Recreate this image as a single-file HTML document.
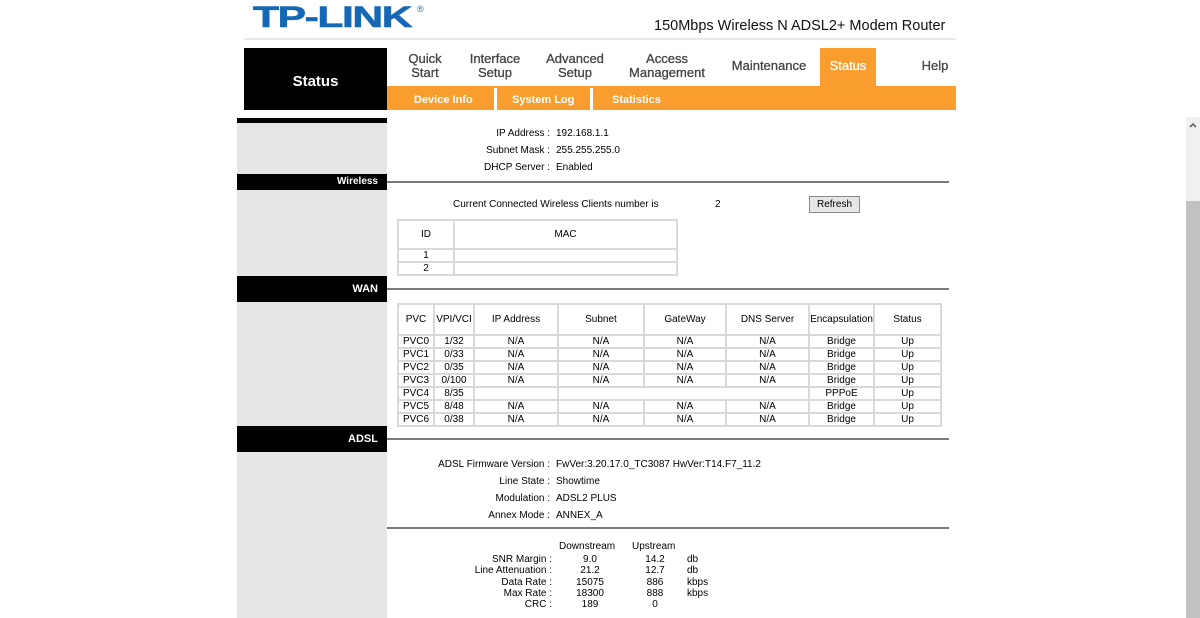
<!DOCTYPE html>
<html><head><meta charset="utf-8"><style>
*{margin:0;padding:0;box-sizing:border-box}
body{width:1200px;height:618px;overflow:hidden;background:#fff;font-family:"Liberation Sans",Arial,sans-serif;font-size:10px;color:#000;position:relative}
.a{position:absolute}
.gray{background:#e6e6e6}
.blk{background:#000;color:#fff;font-weight:bold;text-align:right;padding-right:9px;font-size:11px}
.hl{height:2px;background:#7a7a7a}
.nav{color:#444;font-size:13px;text-align:center;line-height:14px;-webkit-text-stroke:0.3px #444}
.sub{color:#fff;font-size:11px;font-weight:bold}
.r{text-align:right}
table{border-collapse:collapse;position:absolute}
td{border:2px solid #d9d9d9;text-align:center;font-size:10px;padding:0;line-height:10px}
</style></head><body>
<div class="a" style="left:253px;top:1px;color:#1568b5;font-size:30px;font-weight:bold;transform:scaleX(1.42);transform-origin:left top;letter-spacing:-1px;-webkit-text-stroke:0.6px #1568b5">TP-LINK</div>
<div class="a" style="left:417px;top:4px;color:#1568b5;font-size:9px">®</div>
<div class="a" style="left:654px;top:18px;font-size:14.5px;color:#111">150Mbps Wireless N ADSL2+ Modem Router</div>
<div class="a" style="left:244px;top:38px;width:712px;height:2px;background:#e8e8e8"></div>

<div class="a gray" style="left:237px;top:118px;width:150px;height:500px"></div>
<div class="a" style="left:244px;top:48px;width:143px;height:62px;background:#000;color:#fff;font-size:15px;font-weight:bold;text-align:center;line-height:62px;padding-top:3px">Status</div>
<div class="a" style="left:387px;top:86px;width:569px;height:24px;background:#f99d2e"></div>
<div class="a" style="left:820px;top:48px;width:56px;height:38px;background:#f99d2e"></div>
<div class="a" style="left:494px;top:88px;width:3px;height:22px;background:#fff"></div>
<div class="a" style="left:590px;top:88px;width:3px;height:22px;background:#fff"></div>
<div class="a nav" style="left:400px;top:52px;width:50px">Quick<br>Start</div>
<div class="a nav" style="left:462px;top:52px;width:66px">Interface<br>Setup</div>
<div class="a nav" style="left:540px;top:52px;width:70px">Advanced<br>Setup</div>
<div class="a nav" style="left:622px;top:52px;width:90px">Access<br>Management</div>
<div class="a nav" style="left:726px;top:59px;width:86px">Maintenance</div>
<div class="a nav" style="left:820px;top:59px;width:56px;color:#fff;-webkit-text-stroke:0.3px #fff">Status</div>
<div class="a nav" style="left:910px;top:59px;width:50px">Help</div>
<div class="a sub" style="left:414px;top:94px">Device Info</div>
<div class="a sub" style="left:512px;top:94px">System Log</div>
<div class="a sub" style="left:612px;top:94px">Statistics</div>

<div class="a" style="left:237px;top:118px;width:150px;height:5px;background:#000"></div>
<div class="a r" style="left:400px;top:125px;width:150px;line-height:17px">IP Address :<br>Subnet Mask :<br>DHCP Server :</div>
<div class="a" style="left:556px;top:125px;line-height:17px">192.168.1.1<br>255.255.255.0<br>Enabled</div>

<div class="a blk" style="left:237px;top:174px;width:150px;height:16px;line-height:16px;font-size:10px">Wireless</div>
<div class="a hl" style="left:387px;top:181px;width:562px"></div>
<div class="a" style="left:453px;top:199px">Current Connected Wireless Clients number is</div>
<div class="a" style="left:715px;top:199px">2</div>
<div class="a" style="left:809px;top:196px;width:51px;height:17px;background:#e6e6e6;border:1px solid #888;text-align:center;line-height:15px">Refresh</div>
<table style="left:397px;top:219px;width:281px">
<tr style="height:29px"><td style="width:56px">ID</td><td>MAC</td></tr>
<tr style="height:13px"><td>1</td><td></td></tr>
<tr style="height:13px"><td>2</td><td></td></tr>
</table>

<div class="a blk" style="left:237px;top:276px;width:150px;height:26px;line-height:26px">WAN</div>
<div class="a hl" style="left:387px;top:288px;width:562px"></div>
<table style="left:397px;top:303px;width:545px">
<tr style="height:31px"><td style="width:36px">PVC</td><td style="width:40px">VPI/VCI</td><td style="width:84px">IP Address</td><td style="width:86px">Subnet</td><td style="width:82px">GateWay</td><td style="width:83px">DNS Server</td><td style="width:65px">Encapsulation</td><td>Status</td></tr>
<tr style="height:13px"><td>PVC0</td><td>1/32</td><td>N/A</td><td>N/A</td><td>N/A</td><td>N/A</td><td>Bridge</td><td>Up</td></tr>
<tr style="height:13px"><td>PVC1</td><td>0/33</td><td>N/A</td><td>N/A</td><td>N/A</td><td>N/A</td><td>Bridge</td><td>Up</td></tr>
<tr style="height:13px"><td>PVC2</td><td>0/35</td><td>N/A</td><td>N/A</td><td>N/A</td><td>N/A</td><td>Bridge</td><td>Up</td></tr>
<tr style="height:13px"><td>PVC3</td><td>0/100</td><td>N/A</td><td>N/A</td><td>N/A</td><td>N/A</td><td>Bridge</td><td>Up</td></tr>
<tr style="height:13px"><td>PVC4</td><td>8/35</td><td></td><td colspan="3"></td><td>PPPoE</td><td>Up</td></tr>
<tr style="height:13px"><td>PVC5</td><td>8/48</td><td>N/A</td><td>N/A</td><td>N/A</td><td>N/A</td><td>Bridge</td><td>Up</td></tr>
<tr style="height:13px"><td>PVC6</td><td>0/38</td><td>N/A</td><td>N/A</td><td>N/A</td><td>N/A</td><td>Bridge</td><td>Up</td></tr>
</table>

<div class="a blk" style="left:237px;top:426px;width:150px;height:26px;line-height:26px">ADSL</div>
<div class="a hl" style="left:387px;top:438px;width:562px"></div>
<div class="a r" style="left:400px;top:456px;width:150px;line-height:17px">ADSL Firmware Version :<br>Line State :<br>Modulation :<br>Annex Mode :</div>
<div class="a" style="left:556px;top:456px;line-height:17px">FwVer:3.20.17.0_TC3087 HwVer:T14.F7_11.2<br>Showtime<br>ADSL2 PLUS<br>ANNEX_A</div>
<div class="a hl" style="left:387px;top:527px;width:562px"></div>
<div class="a" style="left:559px;top:541px">Downstream</div>
<div class="a" style="left:632px;top:541px">Upstream</div>
<div class="a r" style="left:450px;top:554px;width:102px;line-height:11.3px">SNR Margin :<br>Line Attenuation :<br>Data Rate :<br>Max Rate :<br>CRC :</div>
<div class="a" style="left:570px;top:554px;width:40px;text-align:center;line-height:11.3px">9.0<br>21.2<br>15075<br>18300<br>189</div>
<div class="a" style="left:635px;top:554px;width:40px;text-align:center;line-height:11.3px">14.2<br>12.7<br>886<br>888<br>0</div>
<div class="a" style="left:687px;top:554px;line-height:11.3px">db<br>db<br>kbps<br>kbps</div>

<div class="a" style="left:1186px;top:117px;width:14px;height:501px;background:#f0f0f0"></div>
<div class="a" style="left:1186px;top:201px;width:14px;height:417px;background:#c1c1c1"></div>
<svg class="a" style="left:1189px;top:122px" width="8" height="6"><path d="M1 5 L4 2 L7 5" fill="none" stroke="#555" stroke-width="1.5"/></svg>
</body></html>
